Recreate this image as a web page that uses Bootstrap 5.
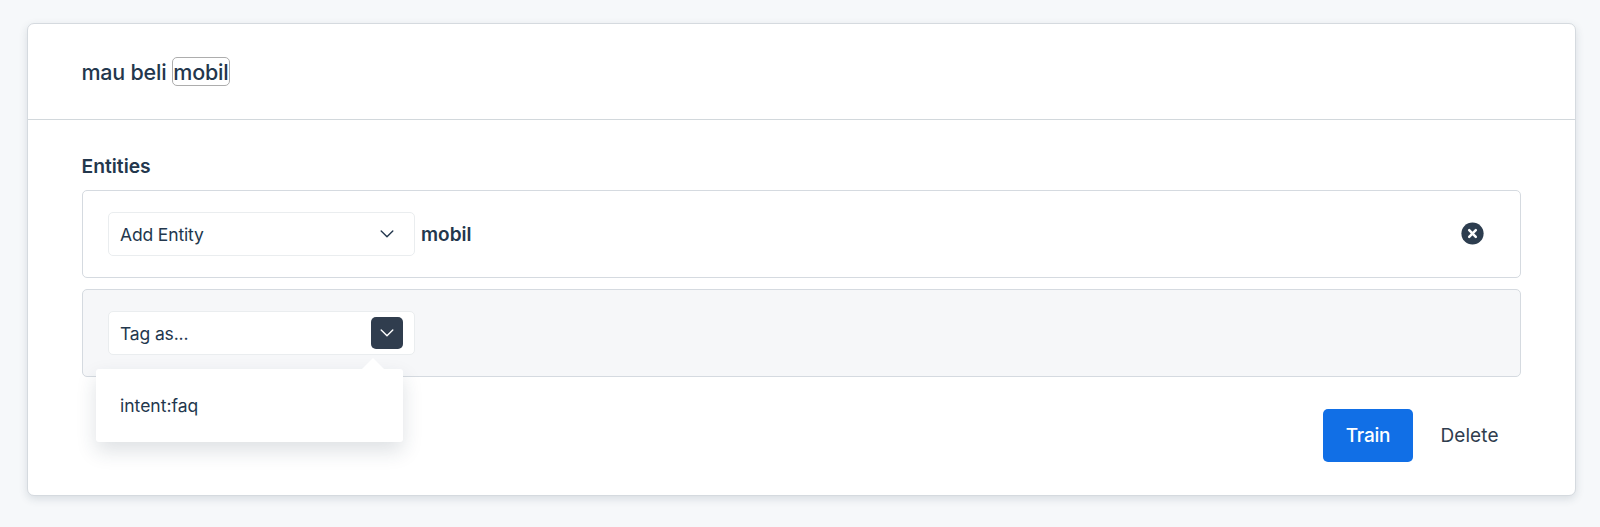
<!DOCTYPE html>
<html lang="id">
<head>
<meta charset="utf-8">
<meta name="viewport" content="width=device-width, initial-scale=1">
<title>Train utterance</title>
<link href="https://cdn.jsdelivr.net/npm/bootstrap@5.3.0/dist/css/bootstrap.min.css" rel="stylesheet">
<style>
  body { background: #f6f8fa; color: #23374d; font-family: Inter, "Liberation Sans", sans-serif; height: 527px; overflow: hidden; }
  .train-card { margin: 23px 24px 0 27px; height: 473px; border: 1px solid #d5dadf; border-radius: 7px; box-shadow: 0 3px 9px rgba(35,55,77,.14); }
  .utterance { height: 96px; padding: 0 53.5px; border-bottom: 1px solid #d2d8dc; font-size: 21.5px; font-weight: 500; line-height: 28px; letter-spacing: -.24px; }
  .token { border: 1.5px solid #adadad; border-radius: 5px; width: 58px; height: 29px; margin-left: 5.5px; }
  .editor { padding: 32px 54px 0 53.5px; }
  .section-title { font-size: 19.3px; font-weight: 600; line-height: 28px; margin: 0 0 10px; }
  .entity-row { height: 88px; border: 1px solid #d5dae0; border-radius: 5px; padding: 0 36px 0 25.5px; }
  .entity-row.tagging { margin-top: 11px; background: #f6f7f9; }
  .picker { width: 307px; height: 44px; border: 1px solid #eaedef; border-radius: 5px; padding: 0 11px; font-size: 17.5px; letter-spacing: -.15px; }
  .picker-label { padding-top: 2px; }
  .toggle { width: 32px; height: 32px; border-radius: 5px; }
  .toggle.active { background: #303d4e; color: #fff; }
  .entity-value { font-size: 19px; font-weight: 600; margin-left: 6px; padding-top: 2px; }
  .remove-icon { margin-bottom: 1px; }
  .tag-menu { top: 57px; left: -13px; width: 307px; height: 73px; padding-left: 24px; border-radius: 3px; letter-spacing: 0; box-shadow: 0 9px 20px rgba(35,55,77,.15); z-index: 2; }
  .tag-menu::before { content: ""; position: absolute; left: 266px; top: -11px; border: 11px solid transparent; border-top: 0; border-bottom-color: #fff; }
  .actions { margin-top: 32px; gap: 3px; font-size: 19px; letter-spacing: .1px; }
  .actions .btn { height: 53px; font-size: inherit; letter-spacing: inherit; border-radius: 5px; border: 0; padding: 2px 0 0; }
  .actions .btn-train, .actions .btn-train:hover { width: 90px; background: #116fe6; color: #fff; font-weight: 500; letter-spacing: -.2px; }
  .actions .btn-delete { width: 105px; color: #303d4e; padding-left: 2px; }
</style>
</head>
<body>
<main class="train-card bg-white">
  <header class="utterance d-flex align-items-center">
    <span>mau beli</span><span class="token d-flex align-items-center justify-content-center">mobil</span>
  </header>
  <section class="editor">
    <h2 class="section-title">Entities</h2>
    <div class="entity-row d-flex align-items-center bg-white">
      <div class="picker d-flex align-items-center justify-content-between">
        <span class="picker-label">Add Entity</span>
        <span class="toggle d-flex align-items-center justify-content-center">
          <svg width="14" height="8" viewBox="0 0 14 8" fill="none" stroke="currentColor" stroke-width="1.4" stroke-linecap="round" stroke-linejoin="round"><path d="M1.2 1 7 6.7 12.8 1"/></svg>
        </span>
      </div>
      <span class="entity-value">mobil</span>
      <svg class="remove-icon ms-auto" width="23" height="23" viewBox="0 0 23 23"><circle cx="11.5" cy="11.5" r="11.1" fill="#2d3d4f"/><path d="m8.2 8.2 6.6 6.6m0-6.6-6.6 6.6" stroke="#fff" stroke-width="2.5" stroke-linecap="round"/></svg>
    </div>
    <div class="entity-row tagging d-flex align-items-center">
      <div class="picker position-relative bg-white d-flex align-items-center justify-content-between">
        <span class="picker-label">Tag as...</span>
        <span class="toggle active d-flex align-items-center justify-content-center">
          <svg width="14" height="8" viewBox="0 0 14 8" fill="none" stroke="currentColor" stroke-width="1.4" stroke-linecap="round" stroke-linejoin="round"><path d="M1.2 1 7 6.7 12.8 1"/></svg>
        </span>
        <div class="tag-menu position-absolute bg-white d-flex align-items-center"><span class="picker-label">intent:faq</span></div>
      </div>
    </div>
    <div class="actions d-flex justify-content-end">
      <button type="button" class="btn btn-train">Train</button>
      <button type="button" class="btn btn-delete">Delete</button>
    </div>
  </section>
</main>
<script src="https://cdn.jsdelivr.net/npm/bootstrap@5.3.0/dist/js/bootstrap.bundle.min.js"></script>
</body>
</html>
